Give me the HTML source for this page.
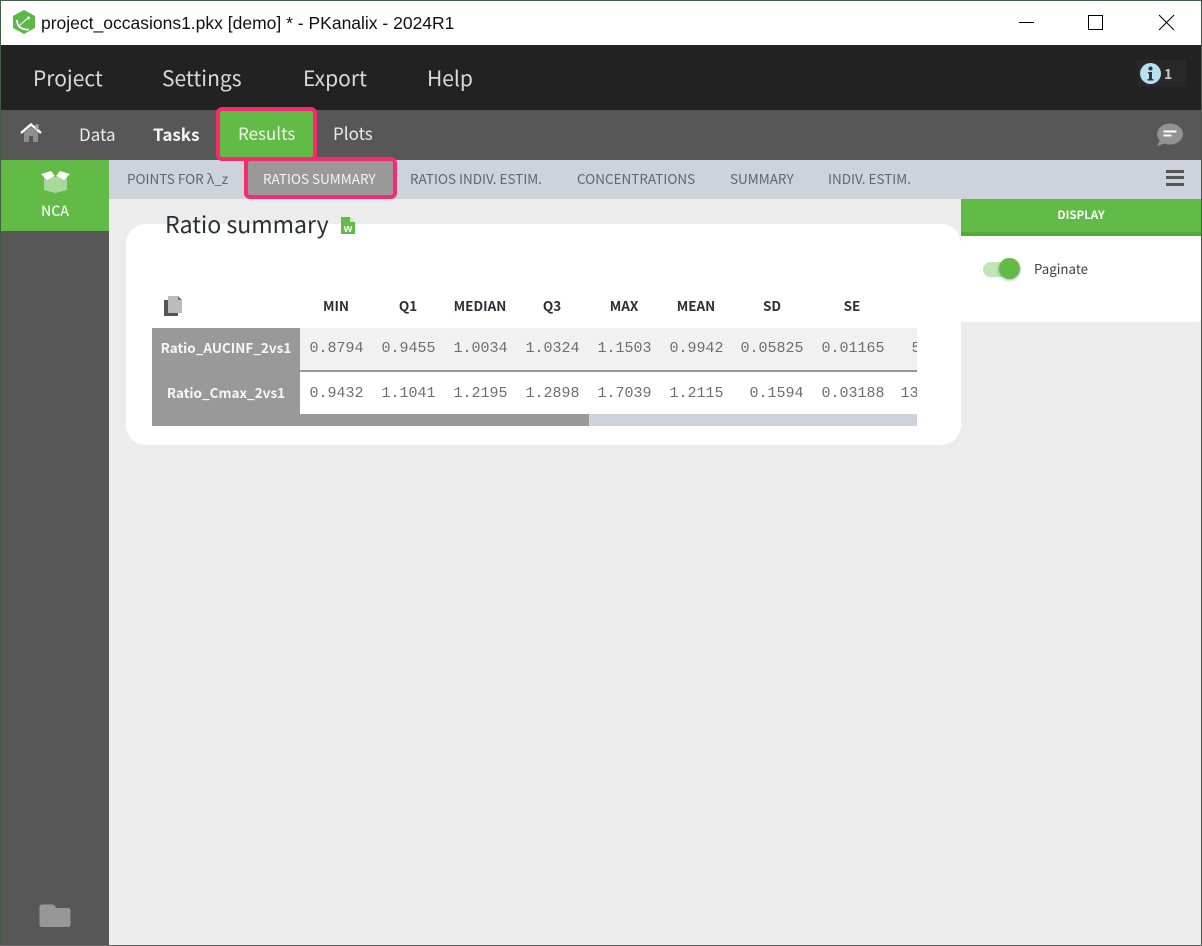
<!DOCTYPE html>
<html><head><meta charset="utf-8"><style>
html,body{margin:0;padding:0;width:1202px;height:946px;overflow:hidden;background:#ececec}
body{position:relative;font-family:"Noto Sans CJK JP","Liberation Sans",sans-serif}
.a{position:absolute}
.t{position:absolute;white-space:nowrap;line-height:1}
.c{transform:translateX(-50%)}
.m{font-family:"Liberation Mono",monospace;font-size:15px;color:#6e6e6e;position:absolute;white-space:nowrap;line-height:1;transform:translateX(-100%);margin-left:-.5px}
.h{font-weight:700;font-size:13.500px;color:#2b3038;position:absolute;white-space:nowrap;line-height:1;transform:translateX(-50%);top:299px}
.s{font-size:13.500px;color:#5f6670;position:absolute;white-space:nowrap;line-height:1;top:172px}
</style></head><body>
<!-- title bar -->
<div class="a" style="left:0;top:0;width:1202px;height:45px;background:#fff"></div>
<div class="a" style="left:0;top:0;width:1202px;height:1px;background:#3f5f45"></div>
<svg class="a" style="left:12px;top:9px" width="24" height="26" viewBox="0 0 24 26"><path d="M12 1 L23 7 V19 L12 25 L1 19 V7Z" fill="#5cb947"/><path d="M5 11 C5 17 9 21 17 20.500" fill="none" stroke="#fff" stroke-width="1.800"/><path d="M8 16 L16 9" stroke="#fff" stroke-width="1"/><circle cx="16.500" cy="9" r="1.500" fill="#fff"/></svg>
<div class="t" style="left:41px;top:15px;font-family:'Liberation Sans',sans-serif;font-size:17.500px;color:#111">project_occasions1.pkx [demo] * - PKanalix - 2024R1</div>
<svg class="a" style="left:1015px;top:10px" width="170" height="26" viewBox="0 0 170 26" fill="none" stroke="#000" stroke-width="1"><path d="M4 12.500H19"/><rect x="73.500" y="5.500" width="14" height="14"/><path d="M144 5L159 20M159 5L144 20"/></svg>
<!-- menu -->
<div class="a" style="left:1px;top:45px;width:1200px;height:65px;background:#222"></div>
<div class="t" style="left:33px;top:68px;font-size:21px;color:#d9d9d9">Project</div>
<div class="t" style="left:162px;top:68px;font-size:21px;color:#d9d9d9">Settings</div>
<div class="t" style="left:303px;top:68px;font-size:21px;color:#d9d9d9">Export</div>
<div class="t" style="left:427px;top:68px;font-size:21px;color:#d9d9d9">Help</div>
<div class="a" style="left:1137px;top:60px;width:49px;height:27px;background:#282828"></div>
<svg class="a" style="left:1140px;top:63px" width="21" height="21" viewBox="0 0 21 21"><circle cx="10.500" cy="10.500" r="10.500" fill="#b9dff2"/><circle cx="10.500" cy="5.500" r="2" fill="#333"/><path d="M8 9h4v7h1.500v1.500h-6V16H9v-5.500H8z" fill="#333"/></svg>
<div class="t" style="left:1164px;top:67px;font-size:14px;font-weight:700;color:#c9c9c9">1</div>
<!-- tabs -->
<div class="a" style="left:1px;top:110px;width:1200px;height:50px;background:#575757"></div>
<svg class="a" style="left:20px;top:122px" width="22" height="22" viewBox="0 0 22 22"><path d="M4 10.500L11 5l7 5.500V20h-5v-6H9v6H4z" fill="#8f8f8f"/><path d="M1 11L11 2.500 21 11" fill="none" stroke="#fff" stroke-width="2.400"/><rect x="15.500" y="2.500" width="3" height="5" fill="#a9a9a9"/></svg>
<div class="t" style="left:79px;top:125px;font-size:17px;color:#ececec">Data</div>
<div class="t" style="left:153px;top:125px;font-size:17px;font-weight:700;color:#f4f4f4">Tasks</div>
<div class="a" style="left:216px;top:107px;width:101px;height:54px;box-sizing:border-box;background:#62bb46;border:4px solid #f9296e;border-radius:6px;z-index:3"></div>
<div class="t" style="left:238px;top:124px;font-size:17px;color:#eef7ea;z-index:4">Results</div>
<div class="t" style="left:333px;top:124px;font-size:17px;color:#ececec">Plots</div>
<svg class="a" style="left:1156px;top:123px" width="27" height="24" viewBox="0 0 27 24"><ellipse cx="14" cy="11" rx="13" ry="10.500" fill="#929292"/><path d="M1 23L5 15l5 5z" fill="#929292"/><path d="M7.500 8.500h13M7.500 12.500h8" stroke="#fff" stroke-width="2" fill="none"/></svg>
<!-- side -->
<div class="a" style="left:1px;top:160px;width:108px;height:785px;background:#575757"></div>
<div class="a" style="left:1px;top:160px;width:108px;height:71px;background:#62bb46"></div>
<svg class="a" style="left:40px;top:170px" width="31" height="24" viewBox="0 0 31 24"><path d="M4 7h23v13l-11.500 3L4 20z" fill="#a9d99a"/><path d="M1 4L11 1l4 5-8 4z" fill="#fff"/><path d="M30 4L20 1l-4 5 8 4z" fill="#fff"/></svg>
<div class="t c" style="left:55px;top:204px;font-size:14px;font-weight:500;color:#f2f9ee">NCA</div>
<svg class="a" style="left:39px;top:904px" width="32" height="24" viewBox="0 0 32 24"><path d="M3 0.500h10c2 0 3 1 4 3.500h12c1.500 0 2.500 1 2.500 2.500V20c0 2-1 3-2.500 3H3c-1.500 0-2.500-1-2.500-3V3C.5 1.500 1.500.5 3 .5z" fill="#979797"/></svg>
<!-- subtabs -->
<div class="a" style="left:109px;top:160px;width:1092px;height:39px;background:#ced2da"></div>
<div class="s" style="left:127px">POINTS FOR λ_z</div>
<div class="a" style="left:244px;top:157px;width:153px;height:42px;box-sizing:border-box;background:#999;border:4px solid #f9296e;border-radius:6px;z-index:3"></div>
<div class="s" style="left:263px;color:#f4f4f4;z-index:4">RATIOS SUMMARY</div>
<div class="s" style="left:410px">RATIOS INDIV. ESTIM.</div>
<div class="s" style="left:577px">CONCENTRATIONS</div>
<div class="s" style="left:730px">SUMMARY</div>
<div class="s" style="left:828px">INDIV. ESTIM.</div>
<div class="a" style="left:1166px;top:170px;width:18px;height:3px;background:#555"></div>
<div class="a" style="left:1166px;top:176px;width:18px;height:3px;background:#555"></div>
<div class="a" style="left:1166px;top:183px;width:18px;height:3px;background:#555"></div>
<!-- right panel -->
<div class="a" style="left:961px;top:199px;width:240px;height:33px;background:#62bb46"></div>
<div class="a" style="left:961px;top:232px;width:240px;height:4px;background:#55a83c"></div>
<div class="a" style="left:961px;top:236px;width:240px;height:86px;background:#fff;border-radius:0 0 4px 4px"></div>
<div class="t c" style="left:1081px;top:210px;font-size:11.500px;font-weight:700;color:#fff">DISPLAY</div>
<div class="a" style="left:983px;top:262px;width:30px;height:15px;background:#c0e4b5;border-radius:8px"></div>
<div class="a" style="left:999px;top:258px;width:21px;height:21px;background:#62bb46;border-radius:50%;box-shadow:0 1px 3px rgba(0,0,0,.35)"></div>
<div class="t" style="left:1034px;top:262px;font-size:13.300px;color:#3c4148">Paginate</div>
<!-- card -->
<div class="a" style="left:126px;top:224px;width:835px;height:221px;background:#fff;border-radius:20px"></div>
<div class="t" style="left:165px;top:212px;font-size:23.100px;color:#2b3038">Ratio summary</div>
<svg class="a" style="left:341px;top:217px" width="14" height="17" viewBox="0 0 14 17"><path d="M0 0h9l5 5v12H0z" fill="#62bb46"/><path d="M9 0l5 5H9z" fill="#cfeac6"/><text x="7" y="15" text-anchor="middle" font-family="Liberation Sans" font-weight="700" font-size="11" fill="#fff">w</text></svg>
<svg class="a" style="left:163px;top:295px" width="20" height="22" viewBox="0 0 20 22"><path d="M1 5h4v13h10v3H1z" fill="#555"/><path d="M5 1h10l4 4v13H5z" fill="#bcbcbc"/><path d="M15 1l4 4h-4z" fill="#777"/></svg>
<!-- table -->
<div class="h" style="left:336px">MIN</div><div class="h" style="left:408px">Q1</div><div class="h" style="left:480px">MEDIAN</div><div class="h" style="left:552px">Q3</div><div class="h" style="left:624px">MAX</div><div class="h" style="left:696px">MEAN</div><div class="h" style="left:772px">SD</div><div class="h" style="left:852px">SE</div>
<div class="a" style="left:152px;top:328px;width:148px;height:98px;background:#999"></div>
<div class="a" style="left:300px;top:328px;width:617px;height:42px;background:#f1f1f1"></div>
<div class="a" style="left:300px;top:370px;width:617px;height:2px;background:#999"></div>
<div class="a" style="left:300px;top:414px;width:289px;height:12px;background:#999"></div>
<div class="a" style="left:589px;top:414px;width:328px;height:12px;background:#ced2da"></div>
<div class="t c" style="left:226px;top:341px;font-size:13.500px;font-weight:700;color:#f7f7f7">Ratio_AUCINF_2vs1</div>
<div class="t c" style="left:226px;top:386px;font-size:13.500px;font-weight:700;color:#f7f7f7">Ratio_Cmax_2vs1</div>
<div style="position:absolute;left:0;top:0;width:917px;height:946px;overflow:hidden">
<div class="m" style="left:364px;top:341px">0.8794</div><div class="m" style="left:436px;top:341px">0.9455</div><div class="m" style="left:508px;top:341px">1.0034</div><div class="m" style="left:580px;top:341px">1.0324</div><div class="m" style="left:652px;top:341px">1.1503</div><div class="m" style="left:724px;top:341px">0.9942</div><div class="m" style="left:804px;top:341px">0.05825</div><div class="m" style="left:885px;top:341px">0.01165</div><div class="m" style="left:921px;top:341px">5</div>
<div class="m" style="left:364px;top:386px">0.9432</div><div class="m" style="left:436px;top:386px">1.1041</div><div class="m" style="left:508px;top:386px">1.2195</div><div class="m" style="left:580px;top:386px">1.2898</div><div class="m" style="left:652px;top:386px">1.7039</div><div class="m" style="left:724px;top:386px">1.2115</div><div class="m" style="left:804px;top:386px">0.1594</div><div class="m" style="left:885px;top:386px">0.03188</div><div class="m" style="left:919px;top:386px">13</div>
</div>
<!-- window border -->
<div class="a" style="left:0;top:0;width:1px;height:946px;background:#3f5f45"></div>
<div class="a" style="left:1201px;top:0;width:1px;height:946px;background:#4a5a4d"></div>
<div class="a" style="left:0;top:945px;width:1202px;height:1px;background:#666"></div>
</body></html>
